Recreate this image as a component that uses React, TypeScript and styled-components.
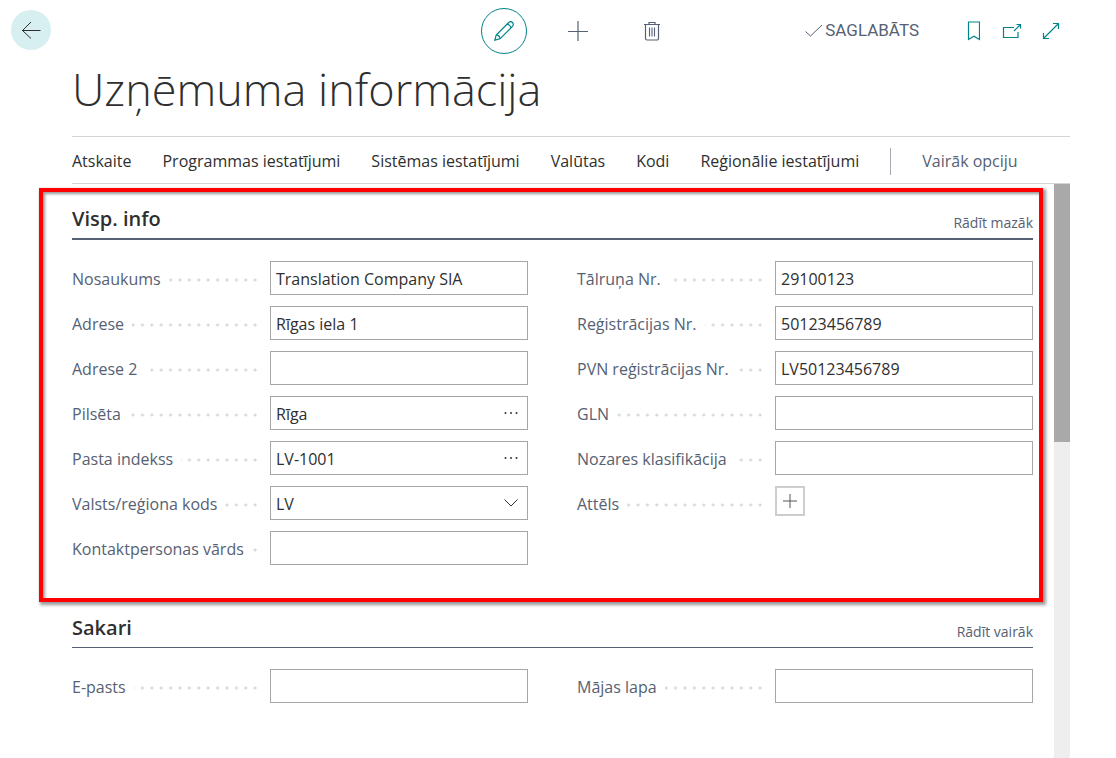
import React from "react";
import styled, { createGlobalStyle } from "styled-components";

const ink = "#2f2f2f";
const slate = "#566173";
const teal = "#008489";

const GlobalStyle = createGlobalStyle`
  *, *::before, *::after { box-sizing: border-box; }
  body {
    margin: 0;
    background: #fff;
    color: ${ink};
    font-family: "Open Sans", "Noto Sans", sans-serif;
    font-size: 16px;
    font-weight: 400;
    line-height: 24px;
  }
  button, input, select { font: inherit; color: inherit; }
`;

const Page = styled.div`
  display: flex;
  flex-direction: column;
  min-height: 100vh;
  padding-right: 46px;
`;

const TopBar = styled.header`
  display: flex;
  align-items: center;
  gap: 21px;
  padding: 8px 0 0 11px;
`;

const IconButton = styled.button<{ $color?: string }>`
  display: flex;
  align-items: center;
  justify-content: center;
  width: 20px;
  height: 24px;
  padding: 0;
  border: 0;
  background: none;
  color: ${(p) => p.$color ?? slate};
  cursor: pointer;
`;

const BackButton = styled(IconButton)`
  width: 40px;
  height: 40px;
  margin-bottom: 2px;
  border-radius: 50%;
  background: #d8eff1;
`;

const EditButton = styled(IconButton)`
  width: 46px;
  height: 46px;
  border: 1px solid ${teal};
  border-radius: 50%;
`;

const Tools = styled.div`
  flex: 1;
  display: grid;
  grid-template-columns: 1fr auto 1fr;
  align-items: center;
`;

const PageActions = styled.div`
  grid-column: 2;
  display: flex;
  align-items: center;
  gap: 41px;
`;

const RecordActions = styled.div`
  display: flex;
  gap: 54px;
`;

const WindowTools = styled.div`
  display: flex;
  align-items: center;
  justify-content: flex-end;
  gap: 44px;
  padding-right: 9px;
`;

const WindowButtons = styled.div`
  display: flex;
  gap: 19px;
`;

const SaveStatus = styled.span`
  display: flex;
  align-items: center;
  gap: 2px;
  padding-bottom: 2px;
  color: ${slate};
  font-family: Roboto, sans-serif;
  font-size: 17px;
  font-weight: 400;
`;

const Title = styled.h1`
  margin: 3px 0 15px 72px;
  font-size: 45px;
  font-weight: 300;
  line-height: 64px;
`;

const Menu = styled.nav`
  display: flex;
  align-items: center;
  gap: 31px;
  height: 48px;
  padding-top: 2px;
  margin-left: 72px;
  border-top: 1px solid #d2d4da;
  border-bottom: 1px solid #d2d4da;
`;

const MenuLink = styled.a<{ $muted?: boolean }>`
  color: ${(p) => (p.$muted ? slate : ink)};
  text-decoration: none;
  white-space: nowrap;
`;

const MenuDivider = styled.span`
  width: 1px;
  height: 27px;
  background: #a6a9b2;
`;

const Body = styled.div`
  flex: 1;
  display: flex;
`;

const Content = styled.main`
  flex: 1;
  padding: 4px 11px 0 39px;
`;

const Section = styled.section<{ $highlight?: boolean }>`
  padding: ${(p) => (p.$highlight ? "9px 6px 33px 29px" : "8px 10px 33px 33px")};
  ${(p) =>
    p.$highlight &&
    `
    border: 4px solid #fe0000;
    box-shadow: 2px 2px 3px 1px rgba(0, 0, 0, 0.4), inset 2px 2px 3px rgba(0, 0, 0, 0.4);
  `}
`;

const SectionHead = styled.div<{ $strong?: boolean }>`
  display: flex;
  align-items: flex-end;
  justify-content: space-between;
  margin-bottom: 21px;
  border-bottom: ${(p) => (p.$strong ? 2 : 1)}px solid ${slate};
`;

const SectionTitle = styled.h2`
  margin: 0;
  padding: 2px 0 3px;
  font-size: 20px;
  font-weight: 600;
  line-height: 32px;
`;

const ToggleButton = styled.button`
  padding: 0 0 5px;
  border: 0;
  background: none;
  color: ${slate};
  font-size: 14px;
  line-height: 20px;
  cursor: pointer;
`;

const Columns = styled.div`
  display: grid;
  grid-template-columns: 1fr 1fr;
  gap: 49px;
`;

const FieldList = styled.div`
  display: flex;
  flex-direction: column;
  gap: 11px;
`;

const FieldRow = styled.div`
  display: flex;
  gap: 10px;
  height: 34px;
`;

const Label = styled.label`
  flex: none;
  width: 188px;
  padding-top: 6px;
  background: radial-gradient(circle at 50% 19px, #d6d9dd 1px, transparent 2px) 0 0 / 5% 100%;
  color: ${slate};
`;

const LabelText = styled.span`
  display: inline-block;
  padding-right: 8px;
  background: #fff;
`;

const Control = styled.div`
  flex: 1;
  min-width: 0;
  display: flex;
  border: 1px solid #a6a6a6;
`;

const TextInput = styled.input`
  flex: 1;
  min-width: 0;
  padding: 2px 5px 0;
  border: 0;
  outline: 0;
  background: none;
`;

const LookupButton = styled(IconButton)`
  width: 32px;
  height: 32px;
`;

const SelectBox = styled.div`
  flex: 1;
  display: grid;
  align-items: center;

  > * { grid-area: 1 / 1; }
  > svg { justify-self: end; margin-right: 8px; pointer-events: none; }
`;

const Select = styled.select`
  appearance: none;
  width: 100%;
  height: 32px;
  padding: 2px 5px 0;
  border: 0;
  outline: 0;
  background: none;
`;

const AddButton = styled(IconButton)`
  width: 30px;
  height: 30px;
  border: 2px solid #cdcdcd;
`;

const ScrollTrack = styled.div`
  width: 16px;
  background: #eee;
`;

const ScrollThumb = styled.div`
  height: 45%;
  background: #a9a9a9;
`;

type IconProps = { w: number; h: number; children: React.ReactNode; stroke?: number };

const Icon = ({ w, h, children, stroke = 1 }: IconProps) => (
  <svg width={w} height={h} viewBox={`0 0 ${w} ${h}`} fill="none" stroke="currentColor" strokeWidth={stroke} aria-hidden="true">
    {children}
  </svg>
);

const Ellipsis = () => (
  <svg width="16" height="4" viewBox="0 0 16 4" fill="#333" aria-hidden="true">
    <circle cx="2.5" cy="2" r="1" />
    <circle cx="8" cy="2" r="1" />
    <circle cx="13.5" cy="2" r="1" />
  </svg>
);

type FieldDef = {
  id: string;
  label: string;
  value?: string;
  kind?: "lookup" | "select" | "image";
};

const companyLeft: FieldDef[] = [
  { id: "name", label: "Nosaukums", value: "Translation Company SIA" },
  { id: "address", label: "Adrese", value: "Rīgas iela 1" },
  { id: "address2", label: "Adrese 2" },
  { id: "city", label: "Pilsēta", value: "Rīga", kind: "lookup" },
  { id: "postcode", label: "Pasta indekss", value: "LV-1001", kind: "lookup" },
  { id: "country", label: "Valsts/reģiona kods", value: "LV", kind: "select" },
  { id: "contact", label: "Kontaktpersonas vārds" },
];

const companyRight: FieldDef[] = [
  { id: "phone", label: "Tālruņa Nr.", value: "29100123" },
  { id: "regno", label: "Reģistrācijas Nr.", value: "50123456789" },
  { id: "vatno", label: "PVN reģistrācijas Nr.", value: "LV50123456789" },
  { id: "gln", label: "GLN" },
  { id: "industry", label: "Nozares klasifikācija" },
  { id: "picture", label: "Attēls", kind: "image" },
];

const Field = ({ id, label, value = "", kind }: FieldDef) => (
  <FieldRow>
    <Label htmlFor={id}>
      <LabelText>{label}</LabelText>
    </Label>
    {kind === "image" ? (
      <AddButton id={id} type="button" $color="#555">
        <Icon w={14} h={14}>
          <path d="M7 0v14" />
          <path d="M0 7h14" />
        </Icon>
      </AddButton>
    ) : (
      <Control>
        {kind === "select" ? (
          <SelectBox>
            <Select id={id} defaultValue={value}>
              <option>{value}</option>
            </Select>
            <Icon w={16} h={10}>
              <path d="M1.500 1.500 8 8l6.500-6.500" />
            </Icon>
          </SelectBox>
        ) : (
          <TextInput id={id} type="text" defaultValue={value} />
        )}
        {kind === "lookup" && (
          <LookupButton type="button" aria-label={label}>
            <Ellipsis />
          </LookupButton>
        )}
      </Control>
    )}
  </FieldRow>
);

const Fields = ({ items }: { items: FieldDef[] }) => (
  <FieldList>
    {items.map((f) => (
      <Field key={f.id} {...f} />
    ))}
  </FieldList>
);

const menu = ["Atskaite", "Programmas iestatījumi", "Sistēmas iestatījumi", "Valūtas", "Kodi", "Reģionālie iestatījumi"];

export default function App() {
  return (
    <>
      <GlobalStyle />
      <Page>
        <TopBar>
          <BackButton type="button" aria-label="Atpakaļ" $color={ink}>
            <Icon w={20} h={18}>
              <path d="M1 9.500h18.500M10 1 1.500 9.500 10 17.500" />
            </Icon>
          </BackButton>
          <Tools>
            <PageActions>
              <EditButton type="button" aria-label="Rediģēt" $color={teal}>
                <Icon w={20} h={20}>
                  <path d="M.8 19.200 2.200 14 14.700 1.500a2.600 2.600 0 0 1 3.800 3.800L6 17.800Z" strokeWidth="1.200" />
                  <path d="M2.200 14c2.200 0 3.800 1.600 3.800 3.800M13 3.200c1.800 0 3.800 2 3.800 3.800" strokeWidth="1.200" />
                </Icon>
              </EditButton>
              <RecordActions>
                <IconButton type="button" aria-label="Jauns">
                  <Icon w={20} h={20}>
                    <path d="M10 0v20" strokeWidth="1.200" />
                    <path d="M0 10.500h20" />
                  </Icon>
                </IconButton>
                <IconButton type="button" aria-label="Dzēst">
                  <Icon w={18} h={20}>
                    <path d="M1 3.500h16M6 3.500v-2h6v2M2.500 3.500v14a1.500 1.500 0 0 0 1.500 1.500h10a1.500 1.500 0 0 0 1.500-1.500v-14" strokeWidth="1.200" />
                    <path d="M6.500 6.500v9M9 6.500v9M11.500 6.500v9" strokeWidth="1.100" />
                  </Icon>
                </IconButton>
              </RecordActions>
            </PageActions>
            <WindowTools>
              <SaveStatus>
                <Icon w={18} h={14}>
                  <path d="M.5 8.500 5.500 13 17 2" />
                </Icon>
                SAGLABĀTS
              </SaveStatus>
              <WindowButtons>
                <IconButton type="button" aria-label="Grāmatzīme" $color={teal}>
                  <Icon w={14} h={20}>
                    <path d="M2.500 1h11v17.500L8 15.200 2.500 18.500Z" strokeWidth="1.200" />
                  </Icon>
                </IconButton>
                <IconButton type="button" aria-label="Atvērt jaunā logā" $color={teal}>
                  <Icon w={20} h={16}>
                    <path d="M12 4.500H1.500v10h14.500V9M12 8l6-6M14.500 1.500h4v4" strokeWidth="1.200" />
                  </Icon>
                </IconButton>
                <IconButton type="button" aria-label="Izvērst" $color={teal}>
                  <Icon w={18} h={18}>
                    <path d="M1.500 16.500l15-15M11 1.500h5.500V7M1.500 11v5.500H7" strokeWidth="1.200" />
                  </Icon>
                </IconButton>
              </WindowButtons>
            </WindowTools>
          </Tools>
        </TopBar>
        <Title>Uzņēmuma informācija</Title>
        <Menu>
          {menu.map((m) => (
            <MenuLink key={m} href="#">
              {m}
            </MenuLink>
          ))}
          <MenuDivider />
          <MenuLink href="#" $muted>
            Vairāk opciju
          </MenuLink>
        </Menu>
        <Body>
          <Content>
            <Section $highlight>
              <SectionHead $strong>
                <SectionTitle>Visp. info</SectionTitle>
                <ToggleButton type="button">Rādīt mazāk</ToggleButton>
              </SectionHead>
              <Columns>
                <Fields items={companyLeft} />
                <Fields items={companyRight} />
              </Columns>
            </Section>
            <Section>
              <SectionHead>
                <SectionTitle>Sakari</SectionTitle>
                <ToggleButton type="button">Rādīt vairāk</ToggleButton>
              </SectionHead>
              <Columns>
                <Fields items={[{ id: "email", label: "E-pasts" }]} />
                <Fields items={[{ id: "homepage", label: "Mājas lapa" }]} />
              </Columns>
            </Section>
          </Content>
          <ScrollTrack>
            <ScrollThumb />
          </ScrollTrack>
        </Body>
      </Page>
    </>
  );
}
